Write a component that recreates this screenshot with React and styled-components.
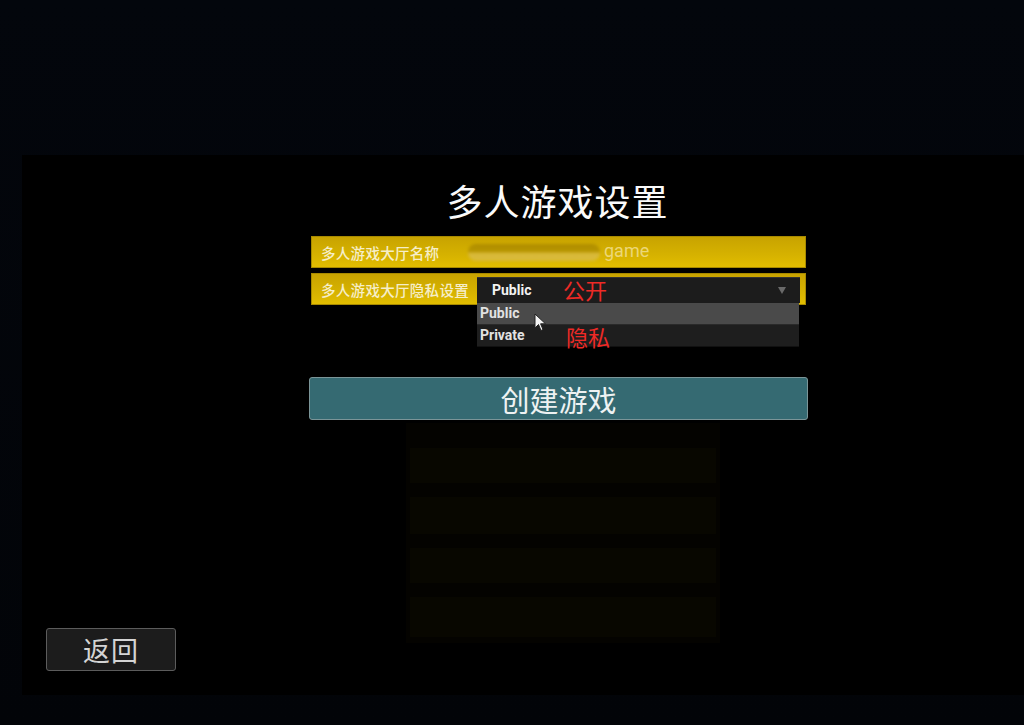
import React from "react"
import styled, { createGlobalStyle } from "styled-components"

const GlobalStyle = createGlobalStyle`
  html, body {
    margin: 0;
    padding: 0;
    background: #03060b;
    font-family: Roboto, "Noto Sans CJK SC", sans-serif;
  }
`

const Screen = styled.div`
  width: 1024px;
  height: 725px;
  overflow: hidden;
  background: linear-gradient(180deg, #03060c 0%, #020408 100%);
  padding: 155px 0 0 22px;
  box-sizing: border-box;
`

const Panel = styled.div`
  position: relative;
  height: 540px;
  background: #000;
  display: flex;
  flex-direction: column;
  padding: 23px 0 0 287px;
  box-sizing: border-box;
`

const Title = styled.h1`
  margin: 0;
  width: 497px;
  text-align: center;
  color: #fafafa;
  font-family: "Noto Sans CJK SC", sans-serif;
  font-weight: 400;
  font-size: 36px;
  line-height: 45px;
  letter-spacing: 1px;
`

const Form = styled.div`
  margin-top: 13px;
  padding-left: 2px;
  display: flex;
  flex-direction: column;
  gap: 5px;
`

const Row = styled.div`
  position: relative;
  width: 495px;
  height: 32px;
  box-sizing: border-box;
  border: 1px solid #a88a00;
  background: linear-gradient(180deg, #c8a300 0%, #d6b200 60%, #e2bd00 100%);
  display: flex;
  align-items: center;
  padding-left: 9px;
`

const Label = styled.span`
  width: ${(p) => p.width}px;
  flex-shrink: 0;
  color: #f6eec8;
  font-family: "Noto Sans CJK SC", sans-serif;
  font-size: 14.5px;
  font-weight: 500;
  letter-spacing: 0.3px;
`

const NameValue = styled.div`
  display: flex;
  align-items: center;
  gap: 4px;
`

const Blur = styled.span`
  width: 132px;
  height: 17px;
  border-radius: 8px;
  background: linear-gradient(180deg, #ae8c00 0%, #b89600 45%, #d8b838 55%, #d9bb3a 100%);
  filter: blur(1.5px);
`

const GameText = styled.span`
  color: #ecd777;
  font-family: Roboto, sans-serif;
  font-size: 18px;
  margin-top: -3px;
`

const Select = styled.div`
  position: relative;
  width: 323px;
  height: 26px;
  margin-top: 1px;
  background: #1c1c1c;
  border-top: 1px solid #333;
  box-sizing: border-box;
  display: flex;
  align-items: center;
  padding: 0 14px 0 15px;
`

const Value = styled.span`
  color: #f2f2f2;
  font-weight: 700;
  font-size: 14px;
  width: 71px;
`

const Note = styled.span`
  color: #ee2a26;
  font-family: "Noto Sans CJK SC", sans-serif;
  font-size: 22px;
  line-height: 26px;
  margin-top: ${(p) => p.shift || 0}px;
`

const Arrow = styled.span`
  margin-left: auto;
  width: 0;
  height: 0;
  border-left: 4px solid transparent;
  border-right: 4px solid transparent;
  border-top: 7px solid #6a6a6a;
`

const Menu = styled.div`
  position: absolute;
  left: 0;
  top: 25px;
  width: 322px;
  background: #1d1d1d;
  border-bottom: 1px solid #111;
  z-index: 2;
`

const Option = styled.div`
  height: 21px;
  display: flex;
  align-items: center;
  padding-left: 3px;
  background: ${(p) => (p.active ? "#4a4a4a" : "#1e1e1e")};
  border-bottom: ${(p) => (p.active ? "1px solid #2a2a2a" : "none")};
`

const OptionText = styled.span`
  color: #e2e2e2;
  font-weight: 700;
  font-size: 14px;
  width: 86px;
`

const Cursor = styled.svg`
  position: absolute;
  left: 57px;
  top: 10px;
`

const CreateButton = styled.button`
  margin-top: 72px;
  width: 499px;
  height: 43px;
  box-sizing: border-box;
  background: #356a72;
  border: 1px solid #7b9598;
  border-radius: 3px;
  color: #eef2f2;
  font-family: "Noto Sans CJK SC", sans-serif;
  font-size: 29px;
  line-height: 38px;
  padding: 0;
`

const Ghost = styled.div`
  margin: 3px 0 0 97px;
  width: 314px;
  height: 220px;
  background: #040300;
  display: flex;
  flex-direction: column;
  gap: 14px;
  padding: 25px 0 0 0;
  box-sizing: border-box;
`

const GhostRow = styled.div`
  height: ${(p) => p.h}px;
  margin: 0 4px;
  background: #080700;
`

const BackButton = styled.button`
  position: absolute;
  left: 24px;
  bottom: 24px;
  width: 130px;
  height: 43px;
  box-sizing: border-box;
  background: #1c1c1c;
  border: 1px solid #5c5c5c;
  border-radius: 3px;
  color: #d4d4d4;
  font-family: "Noto Sans CJK SC", sans-serif;
  font-size: 27px;
  line-height: 36px;
  letter-spacing: 1px;
  padding: 0;
`

export default function App() {
  return (
    <>
      <GlobalStyle />
      <Screen>
        <Panel>
          <Title>多人游戏设置</Title>
          <Form>
            <Row>
              <Label width={147}>多人游戏大厅名称</Label>
              <NameValue>
                <Blur />
                <GameText>game</GameText>
              </NameValue>
            </Row>
            <Row>
              <Label width={156}>多人游戏大厅隐私设置</Label>
              <Select>
                <Value>Public</Value>
                <Note shift={-3}>公开</Note>
                <Arrow />
                <Menu>
                  <Option active>
                    <OptionText>Public</OptionText>
                  </Option>
                  <Option>
                    <OptionText>Private</OptionText>
                    <Note shift={2}>隐私</Note>
                  </Option>
                  <Cursor width="14" height="20" viewBox="0 0 14 20">
                    <path
                      d="M1 1 L1 15 L4.5 11.5 L7 17.5 L9 16.6 L6.6 10.8 L11.5 10.8 Z"
                      fill="#f4f4f4"
                      stroke="#222"
                      strokeWidth="1"
                    />
                  </Cursor>
                </Menu>
              </Select>
            </Row>
          </Form>
          <CreateButton>创建游戏</CreateButton>
          <Ghost>
            <GhostRow h={35} />
            <GhostRow h={37} />
            <GhostRow h={35} />
            <GhostRow h={40} />
          </Ghost>
          <BackButton>返回</BackButton>
        </Panel>
      </Screen>
    </>
  )
}
